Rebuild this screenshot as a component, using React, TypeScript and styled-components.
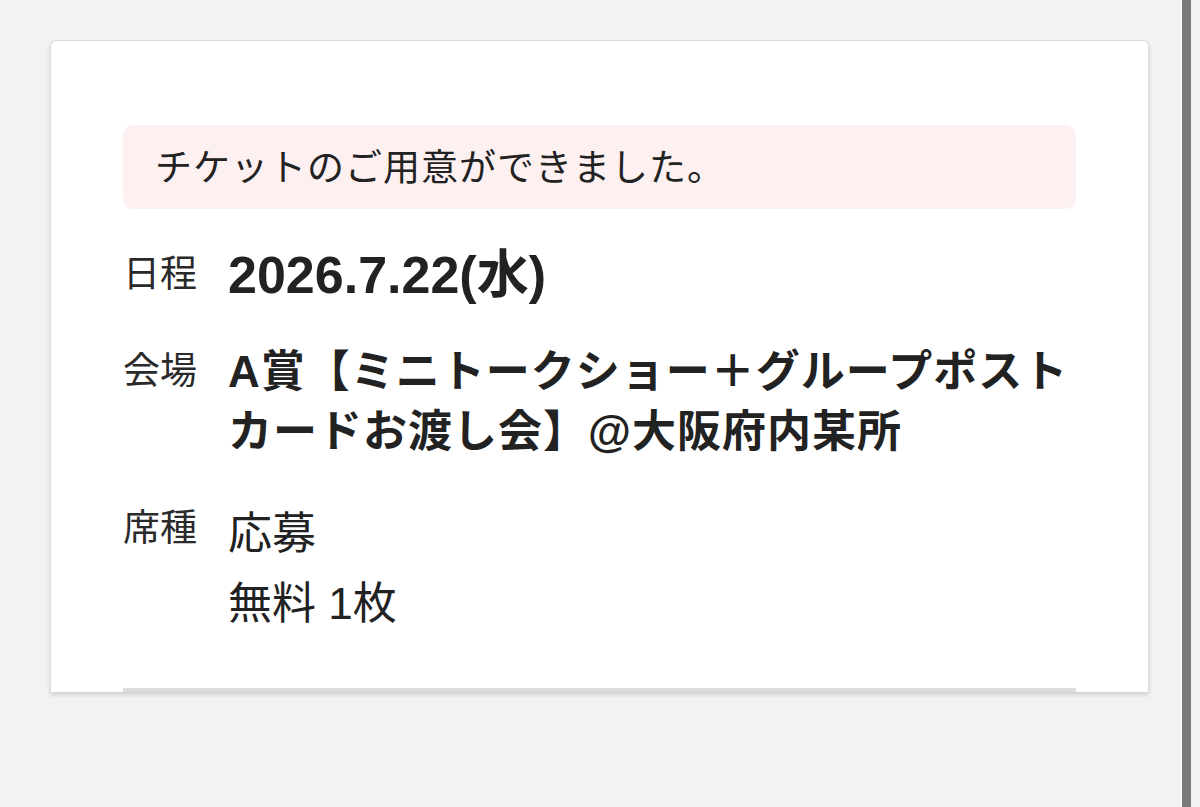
import styled, { createGlobalStyle } from 'styled-components';

const GlobalStyle = createGlobalStyle`
  html, body {
    margin: 0;
    padding: 0;
    background: #f2f2f4;
  }
  body {
    font-family: "Noto Sans CJK JP", "Noto Sans", sans-serif;
    color: #222;
  }
`;

const Page = styled.div`
  display: flex;
  min-height: 807px;
  background: #f2f2f4;
`;

const Main = styled.main`
  flex: 1;
  padding: 40px 32px 0 50px;
`;

const ScrollThumb = styled.div`
  width: 9px;
  margin-right: 9px;
  background: #79797b;
  border-left: 1px solid #f8f8f8;
`;

const Card = styled.section`
  background: #fff;
  border: 1px solid #dcdcdc;
  border-bottom: none;
  border-radius: 6px 6px 0 0;
  box-shadow: 0 3px 4px rgba(0, 0, 0, 0.14);
  padding: 84px 72px 0;
`;

const Notice = styled.div`
  background: #fdf0f1;
  border-radius: 10px;
  padding: 18px 32px 22px;
  font-size: 37px;
  line-height: 44px;
  letter-spacing: 1px;
  color: #222;
`;

const Details = styled.dl`
  display: grid;
  grid-template-columns: 105px 1fr;
  row-gap: 37px;
  margin: 36px 0 0;
  padding-bottom: 49px;
`;

const Label = styled.dt`
  font-size: 37px;
  line-height: 52px;
  color: #2a2a2a;
`;

// Latin digits come from Liberation Sans, kana and kanji fall through to Noto
const Value = styled.dd<{ $bold?: boolean; $size?: number; $tracking?: number }>`
  margin: 0;
  font-family: "Liberation Sans", "Noto Sans CJK JP", sans-serif;
  font-size: ${p => p.$size ?? 44}px;
  line-height: 60px;
  letter-spacing: ${p => p.$tracking ?? 0}px;
  font-weight: ${p => (p.$bold ? 700 : 400)};
  color: #222;
`;

const ValueLine = styled.div`
  line-height: 70px;
`;

const Divider = styled.div`
  border-top: 4px solid #dcdcdc;
`;

const App = () => {
  return (
    <>
      <GlobalStyle />
      <Page>
        <Main>
          <Card>
            <Notice>チケットのご用意ができました。</Notice>
            <Details>
              <Label>日程</Label>
              <Value $bold $size={52}>2026.7.22(水)</Value>
              <Label>会場</Label>
              <Value $bold $tracking={1}>
                A賞【ミニトークショー＋グループポストカードお渡し会】@大阪府内某所
              </Value>
              <Label>席種</Label>
              <Value>
                <ValueLine>応募</ValueLine>
                <ValueLine>無料 1枚</ValueLine>
              </Value>
            </Details>
            <Divider />
          </Card>
        </Main>
        <ScrollThumb />
      </Page>
    </>
  );
};

export default App;
